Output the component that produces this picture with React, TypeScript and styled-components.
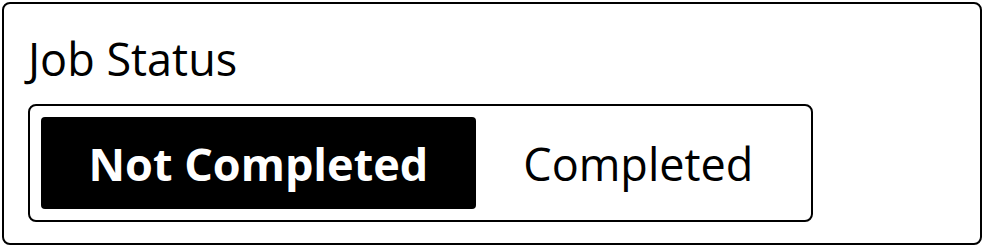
import styled, { createGlobalStyle } from 'styled-components';
import { useState } from 'react';

const GlobalStyle = createGlobalStyle`
  body {
    margin: 0;
    background: #fff;
    font-family: 'Open Sans', 'Noto Sans', sans-serif;
    color: #000;
  }
`;

const options = ['Not Completed', 'Completed'];

function App() {
  const [status, setStatus] = useState('Not Completed');

  return (
    <>
      <GlobalStyle />
      <Card>
        <Label>Job Status</Label>
        <Toggle>
          {options.map((opt) => (
            <Option key={opt} $active={status === opt} onClick={() => setStatus(opt)}>
              {opt}
            </Option>
          ))}
        </Toggle>
      </Card>
    </>
  );
}

export default App;

const Card = styled.div`
  margin: 2px;
  width: 980px;
  height: 243px;
  box-sizing: border-box;
  border: 2px solid #000;
  border-radius: 8px;
  padding: 25px 24px 0 24px;
  display: flex;
  flex-direction: column;
  align-items: flex-start;
  gap: 15px;
`;

const Label = styled.div`
  font-size: 45px;
  line-height: 60px;
`;

const Toggle = styled.div`
  display: flex;
  border: 2px solid #000;
  border-radius: 8px;
  padding: 11px 10px 11px 11px;
`;

const Option = styled.button<{ $active: boolean }>`
  font-family: inherit;
  font-size: 45px;
  font-weight: ${(p) => (p.$active ? 700 : 400)};
  height: 92px;
  padding: 0 47.5px;
  border: none;
  border-radius: 4px;
  background: ${(p) => (p.$active ? '#000' : 'transparent')};
  color: ${(p) => (p.$active ? '#fff' : '#000')};
  cursor: pointer;
`;
